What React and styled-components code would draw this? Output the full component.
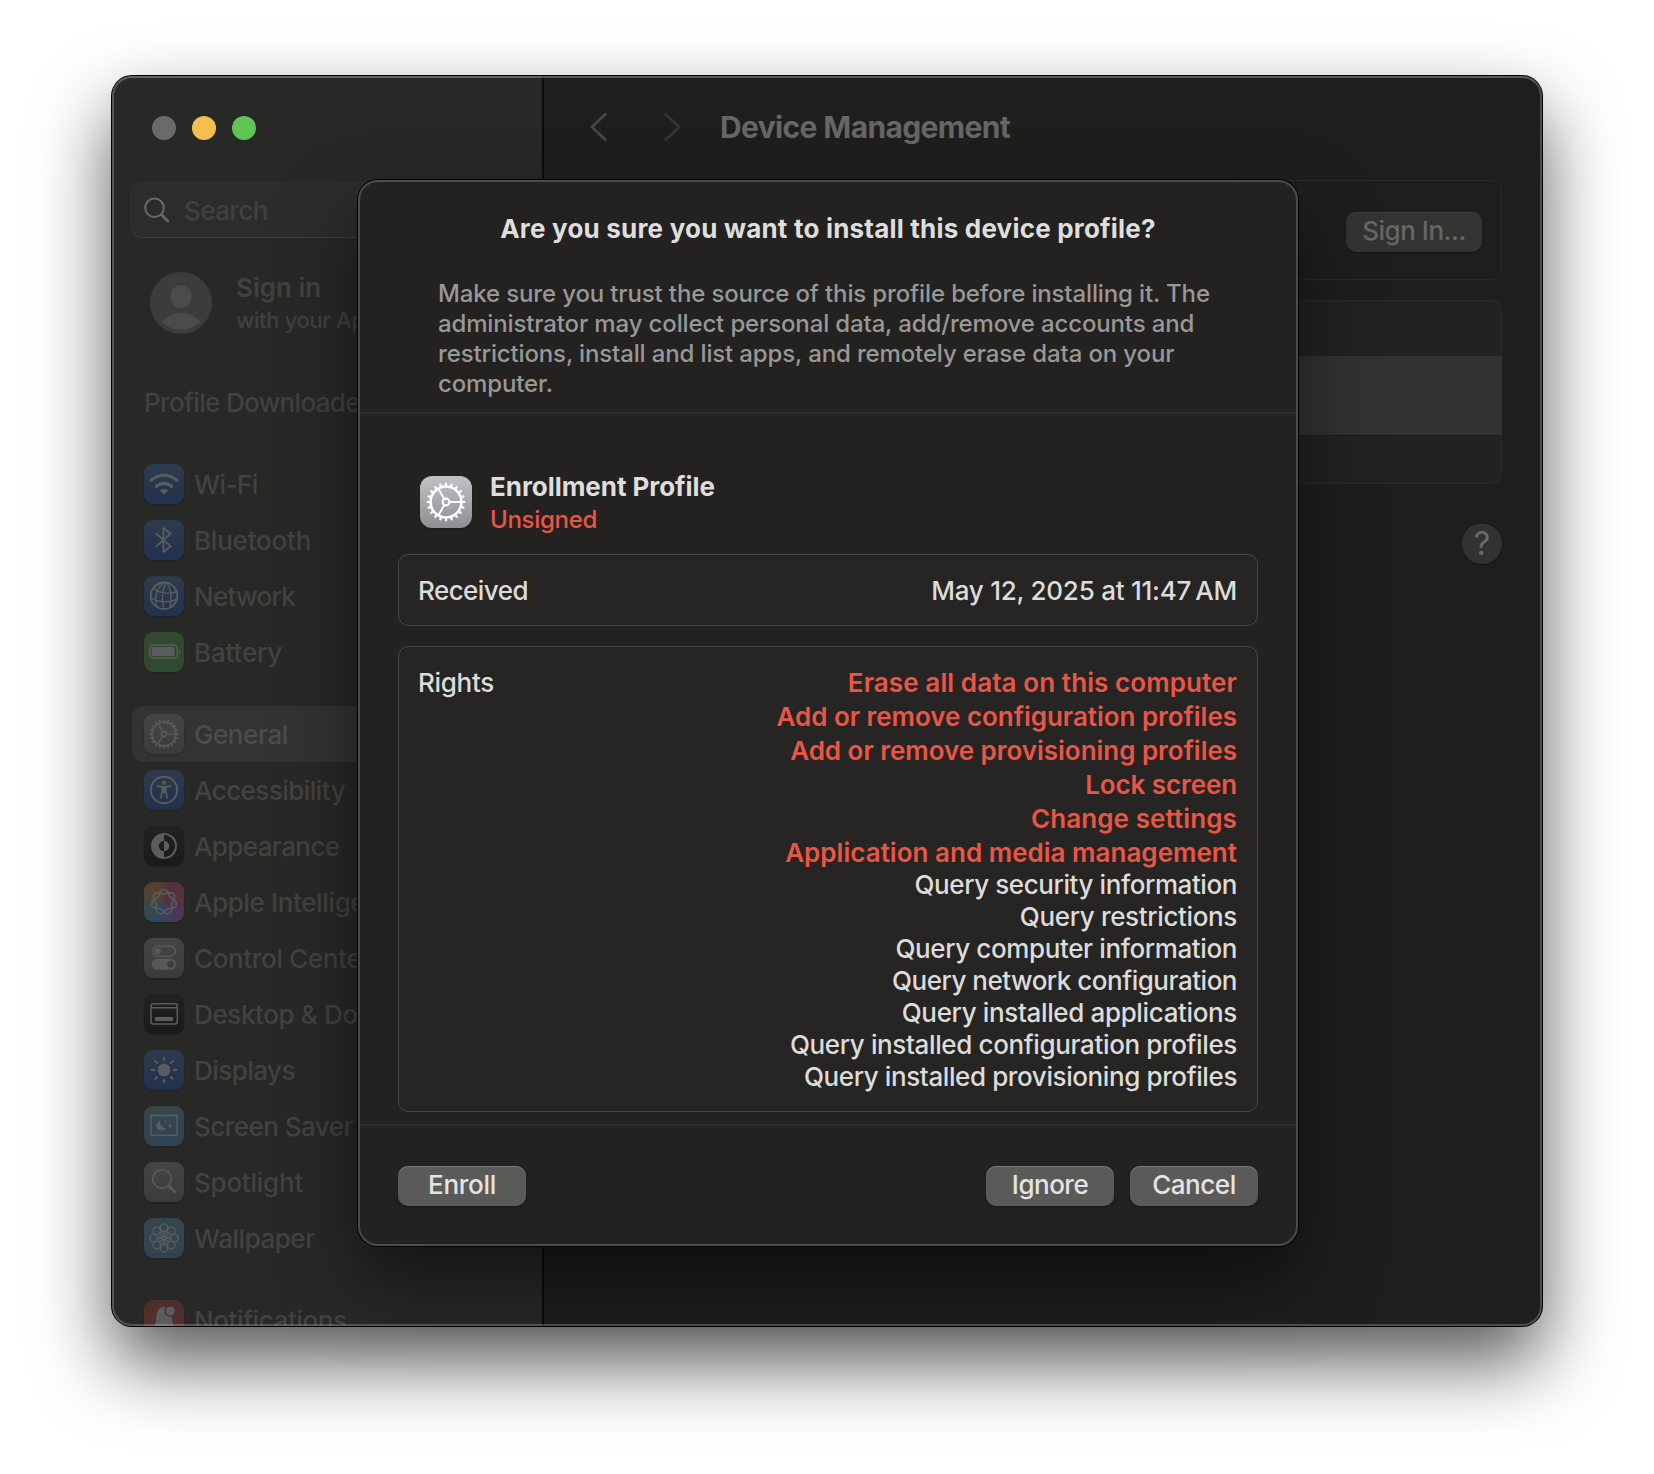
import React from "react";
import styled, { createGlobalStyle, css } from "styled-components";

const GlobalStyle = createGlobalStyle`
  * { box-sizing: border-box; }
  body {
    margin: 0;
    background: #fff;
    font-family: Inter, "Liberation Sans", sans-serif;
    font-size: 26px;
    font-weight: 500;
    overflow: hidden;
  }
  button { font: inherit; border: 0; padding: 0; }
  svg { display: block; flex: none; }
`;

const Desktop = styled.div`
  height: 1474px;
  padding: 76px 112px 148px;
`;

const Window = styled.div`
  position: relative;
  display: flex;
  height: 1250px;
  border-radius: 20px;
  background: #1e1e1c;
  box-shadow: 0 0 0 1px #000, 0 36px 76px rgba(0, 0, 0, 0.66);

  &::after {
    content: "";
    position: absolute;
    inset: 0;
    border-radius: 20px;
    border: 2px solid rgba(255, 255, 255, 0.21);
    border-top-color: rgba(255, 255, 255, 0.27);
    pointer-events: none;
  }
`;

/* ---------- sidebar ---------- */

const Sidebar = styled.aside`
  width: 432px;
  flex: none;
  display: flex;
  flex-direction: column;
  overflow: hidden;
  background: #282826;
  border-right: 2px solid #0b0b0a;
  border-radius: 20px 0 0 20px;
`;

const TrafficLights = styled.div`
  display: flex;
  gap: 16px;
  padding: 40px 0 0 40px;
`;

const Light = styled.span`
  width: 24px;
  height: 24px;
  border-radius: 50%;
  background: ${(p) => p.$color};
`;

const SearchField = styled.div`
  display: flex;
  align-items: center;
  gap: 14px;
  flex: none;
  height: 56px;
  margin: 42px 18px 0;
  padding: 0 13px;
  border: 1px solid #313130;
  border-bottom-color: #40403e;
  border-radius: 12px;
  background: #2c2c2c;
  color: #40403d;
  letter-spacing: -0.58px;
`;

const Account = styled.div`
  display: flex;
  gap: 24px;
  margin: 34px 0 0 38px;
  height: 62px;
  flex: none;
`;

const AccountText = styled.div`
  display: flex;
  flex-direction: column;
  white-space: nowrap;
  color: #414140;
`;

const AccountName = styled.div`
  font-weight: 600;
  line-height: 32px;
`;

const AccountHint = styled.div`
  font-size: 22px;
  line-height: 33px;
  letter-spacing: -0.35px;
`;

const Notice = styled.div`
  margin: 41px 0 -1px 32px;
  line-height: 56px;
  letter-spacing: -0.66px;
  color: #414140;
`;

const NavGroup = styled.nav`
  display: flex;
  flex-direction: column;
  flex: none;
  margin: 26px 20px 0;
`;

const NavItem = styled.div`
  display: flex;
  align-items: center;
  gap: 10px;
  height: 56px;
  padding: 0 12px;
  border-radius: 12px;
  white-space: nowrap;
  color: #424241;
  letter-spacing: ${(p) => p.$track}px;
  ${(p) =>
    p.$active &&
    css`
      background: #333333;
      color: #4c4c4b;
    `}
`;

const Tile = styled.span`
  display: flex;
  width: ${(p) => p.$size || 40}px;
  height: ${(p) => p.$size || 40}px;
  flex: none;
  border-radius: ${(p) => (p.$size ? 12 : 9)}px;
  background: ${(p) => p.$bg};
  color: ${(p) => p.$fg || "#5b5c5d"};
  box-shadow: 0 1px 2px rgba(0, 0, 0, 0.25);
`;

/* ---------- main pane ---------- */

const Main = styled.main`
  flex: 1;
  display: flex;
  flex-direction: column;
  padding: 0 40px;
`;

const Toolbar = styled.header`
  display: flex;
  align-items: center;
  height: 104px;
  padding: 0 0 3px 5px;
`;

const NavArrow = styled.svg`
  width: 18px;
  height: 30px;
  margin-right: ${(p) => p.$gap}px;
  fill: none;
  stroke: ${(p) => p.$color};
  stroke-width: 2.7;
  stroke-linecap: round;
  stroke-linejoin: round;
`;

const PageTitle = styled.h1`
  margin: 1px 0 0;
  font-size: 30px;
  line-height: 36px;
  font-weight: 700;
  letter-spacing: -0.63px;
  color: #666666;
`;

const AccountCard = styled.section`
  display: flex;
  align-items: center;
  justify-content: flex-end;
  height: 100px;
  padding: 4px 19px 0;
  border: 1px solid #292928;
  border-radius: 10px;
  background: #1e1e1e;
`;

const ProfilesCard = styled.section`
  display: flex;
  flex-direction: column;
  height: 184px;
  margin-top: 20px;
  border: 1px solid #2a2a29;
  border-radius: 10px;
  background: #222222;
`;

const SelectedProfile = styled.div`
  height: 80px;
  margin: 55px -1px 0;
  background: #323232;
  border-bottom: 1px solid #1b1b1b;
`;

const HelpButton = styled.button`
  align-self: flex-end;
  width: 40px;
  height: 40px;
  margin-top: 40px;
  border-radius: 50%;
  background: #323232;
  color: #6a6a6a;
  font-size: 32px;
  font-weight: 400;
  line-height: 40px;
  text-align: center;
  box-shadow: inset 0 1px 0 #3a3a3a, 0 1px 2px rgba(0, 0, 0, 0.3);
`;

const Button = styled.button`
  width: ${(p) => p.$width || 128}px;
  height: 40px;
  padding-bottom: 2px;
  border-radius: 10px;
  line-height: 38px;
  letter-spacing: ${(p) => p.$track || 0}px;
  background: ${(p) => (p.$dim ? "#333332" : "#5a5a58")};
  color: ${(p) => (p.$dim ? "#666665" : "#e4e4e3")};
  box-shadow: inset 0 1px 0 ${(p) => (p.$dim ? "#3d3d3c" : "#7a7a78")},
    0 1px 2px rgba(0, 0, 0, 0.4);
`;

/* ---------- sheet ---------- */

const Sheet = styled.div`
  position: absolute;
  left: 246px;
  top: 104px;
  width: 940px;
  height: 1066px;
  display: flex;
  flex-direction: column;
  border: 2px solid #4c4c4b;
  border-radius: 20px;
  background: #232220;
  box-shadow: 0 0 0 1px #000, 0 36px 76px rgba(0, 0, 0, 0.5);
`;

const SheetHeader = styled.div`
  padding: 31px 72px 13px 78px;
  border-bottom: 2px solid #2c2c2a;
`;

const SheetTitle = styled.h2`
  margin: 0 -22px 0 -28px;
  font-size: 26px;
  line-height: 32px;
  font-weight: 700;
  letter-spacing: 0.2px;
  text-align: center;
  color: #dededd;
`;

const SheetNote = styled.p`
  margin: 34px 0 0;
  font-size: 24px;
  line-height: 30px;
  letter-spacing: -0.14px;
  color: #989897;
`;

const SheetBody = styled.div`
  flex: 1;
  display: flex;
  flex-direction: column;
  padding: 57px 38px 12px;
  border-bottom: 2px solid #2c2c2a;
`;

const ProfileHead = styled.div`
  display: flex;
  gap: 18px;
  height: 63px;
  padding: 0 22px;
  margin-bottom: 20px;

  > ${Tile} { margin-top: 5px; }
`;

const ProfileName = styled.div`
  line-height: 32px;
  font-weight: 700;
  letter-spacing: -0.05px;
  color: #dededd;
`;

const ProfileStatus = styled.div`
  font-size: 24px;
  line-height: 34px;
  letter-spacing: -0.3px;
  color: #eb5545;
`;

const InfoBox = styled.div`
  display: flex;
  justify-content: space-between;
  padding: 19px 20px 0 19px;
  margin-bottom: ${(p) => p.$gap || 0}px;
  border: 1px solid #464643;
  border-radius: 10px;
  background: #262523;
  color: #dcdcdb;
  height: ${(p) => p.$height}px;
`;

const Term = styled.div`
  line-height: 34px;
  letter-spacing: ${(p) => p.$track}px;
`;

const Value = styled.div`
  line-height: 34px;
  letter-spacing: -0.25px;
`;

const RightsList = styled.ul`
  list-style: none;
  margin: 0;
  padding: 0;
  text-align: right;
`;

const Right = styled.li`
  line-height: ${(p) => (p.$danger ? 34 : 32)}px;
  font-weight: ${(p) => (p.$danger ? 600 : 500)};
  color: ${(p) => (p.$danger ? "#eb5545" : "#dcdcdb")};
  letter-spacing: ${(p) => p.$track}px;
  ${(p) => p.$danger && css`&:nth-child(6) { margin-bottom: -1px; }`}
`;

const SheetFooter = styled.div`
  display: flex;
  gap: 16px;
  height: 118px;
  padding: 40px 38px 0;
  > :first-child { margin-right: auto; }
`;

/* ---------- drawings ---------- */

const Glyph = ({ size = 40, children }) => (
  <svg
    width={size}
    height={size}
    viewBox="0 0 40 40"
    fill="none"
    stroke="currentColor"
    strokeWidth="1.8"
    strokeLinecap="round"
    strokeLinejoin="round"
  >
    {children}
  </svg>
);

const spin = (n, draw) =>
  Array.from({ length: n }, (_, i) => (
    <g key={i} transform={`rotate(${(360 / n) * i} 20 20)`}>
      {draw}
    </g>
  ));

const Gear = ({ size }) => (
  <Glyph size={size}>
    <circle cx="20" cy="20" r="11.9" strokeWidth="2" />
    {spin(20, <path d="M20 7.8V5.9" strokeWidth="1.7" />)}
    <circle cx="20" cy="20" r="2.6" strokeWidth="1.6" />
    {spin(3, <path d="M23 20H31.5" strokeWidth="1.5" strokeLinecap="butt" />)}
  </Glyph>
);

const knot = (() => {
  const pts = [];
  for (let i = 0; i <= 280; i++) {
    const t = (i / 280) * Math.PI * 4;
    const r = 10.2 + 2.3 * Math.cos(3.5 * t);
    pts.push(
      `${(20 + r * Math.sin(t)).toFixed(2)} ${(20 - r * Math.cos(t)).toFixed(2)}`
    );
  }
  return `M${pts.join("L")}Z`;
})();

const glyphs = {
  wifi: (
    <Glyph>
      <path d="M7 16.4A19 19 0 0 1 33 16.4" strokeWidth="3.2" />
      <path d="M12.4 22.4A11 11 0 0 1 27.6 22.4" strokeWidth="3.2" />
      <path
        d="M20 30.2L16.2 26.6A5.6 5.6 0 0 1 23.8 26.6Z"
        fill="currentColor"
        strokeWidth="0.6"
      />
    </Glyph>
  ),
  bluetooth: (
    <Glyph>
      <path d="M12.4 13.8L26.6 26.3L19.4 32V8L26.6 13.7L12.4 26.2" strokeWidth="1.8" />
    </Glyph>
  ),
  globe: (
    <Glyph>
      <circle cx="20" cy="19.7" r="13.3" strokeWidth="1.8" />
      <path
        d="M20.5 6.5C13.5 11 9.5 20 13.2 31M22 6.6C18.3 14 17 25 20.3 33M23.2 6.8C26.5 12 28.2 22 26.2 31.3M20.5 6.5C14.5 7 10 10.5 7.6 15M9.5 12.2C15 17.6 26 18.2 32.6 15.5M6.8 21.5C13 26.5 26 27.2 32.6 23.2"
        strokeWidth="1.4"
      />
    </Glyph>
  ),
  battery: (
    <Glyph>
      <rect x="5.7" y="13" width="27.5" height="13" rx="3.8" strokeWidth="1.4" />
      <rect x="7.6" y="15" width="23" height="9" rx="2" fill="currentColor" stroke="none" />
      <path d="M35.2 17.2C36.8 17.7 36.8 21.3 35.2 21.8Z" fill="currentColor" stroke="none" />
    </Glyph>
  ),
  gear: <Gear />,
  accessibility: (
    <Glyph>
      <circle cx="20" cy="20" r="13.2" strokeWidth="1.9" />
      <circle cx="20" cy="12.8" r="2.1" fill="currentColor" stroke="none" />
      <path
        d="M13.5 16L18.3 16.9V21L16.8 27.8M26.5 16L21.7 16.9V21L23.2 27.8M18.3 16.9H21.7M18.3 21.2L20 22L21.7 21.2"
        strokeWidth="1.6"
      />
      <path d="M18 16.8H22V22.5H18Z" fill="currentColor" stroke="none" />
    </Glyph>
  ),
  appearance: (
    <Glyph>
      <circle cx="20" cy="20" r="12" strokeWidth="2" />
      <path d="M20 8A12 12 0 0 0 20 32V25.2A5.2 5.2 0 0 1 20 14.8Z" fill="currentColor" stroke="none" />
      <path d="M20 14.8A5.2 5.2 0 0 1 20 25.2Z" fill="currentColor" stroke="none" />
    </Glyph>
  ),
  knot: (
    <Glyph>
      <path d={knot} strokeWidth="1.5" />
    </Glyph>
  ),
  toggles: (
    <Glyph>
      <rect x="8.5" y="8.3" width="23" height="10" rx="5" strokeWidth="1.5" />
      <circle cx="13.7" cy="13.3" r="3.2" fill="currentColor" stroke="none" />
      <rect x="7.8" y="20.8" width="24.4" height="11" rx="5.5" fill="currentColor" stroke="none" />
      <circle cx="26.6" cy="26.3" r="3.3" fill="#3c3c3b" stroke="none" />
    </Glyph>
  ),
  dock: (
    <Glyph>
      <rect x="7" y="9.8" width="26.3" height="20.3" rx="2.4" strokeWidth="1.5" />
      <path d="M7 13.8H33.3" strokeWidth="1.5" />
      <rect x="11" y="23" width="18" height="4" rx="0.8" fill="currentColor" stroke="none" />
    </Glyph>
  ),
  sun: (
    <Glyph>
      <circle cx="20" cy="20" r="6.3" fill="currentColor" stroke="none" />
      {spin(8, <path d="M20 10.3V7.6" strokeWidth="1.9" />)}
    </Glyph>
  ),
  screensaver: (
    <Glyph>
      <rect x="7" y="9.5" width="26.2" height="19.8" strokeWidth="1.5" strokeLinejoin="miter" />
      <path d="M16.5 14.8A5 5 0 1 0 22 21.8A5 5 0 0 1 16.5 14.8Z" fill="currentColor" stroke="none" />
      <path d="M26 17L26.7 19L28.7 19.7L26.7 20.4L26 22.4L25.3 20.4L23.3 19.7L25.3 19ZM21.5 13.2L22 14.8L23.6 15.3L22 15.8L21.5 17.4L21 15.8L19.4 15.3L21 14.8Z" fill="currentColor" stroke="none" />
    </Glyph>
  ),
  spotlight: (
    <Glyph>
      <circle cx="18" cy="17" r="9.3" strokeWidth="1.8" />
      <path d="M24.9 24L30.8 29.9" strokeWidth="2.6" />
    </Glyph>
  ),
  flower: (
    <Glyph>
      {spin(
        8,
        <>
          <circle cx="20" cy="9.6" r="3.7" strokeWidth="1.3" />
          <path d="M18 12.8L21.4 19.6M22 12.8L18.6 19.6" strokeWidth="1.1" />
        </>
      )}
    </Glyph>
  ),
  bell: (
    <Glyph>
      <path
        d="M8.5 31C12 26 11.5 20 12.5 15C13.5 10 16 7.5 18 7.3C19 6.5 20.5 6.4 21.3 7.2A6.3 6.3 0 0 0 27.8 16.8C28.5 21 28.5 26.5 32 31Z"
        fill="currentColor"
        stroke="none"
      />
      <circle cx="26.3" cy="11" r="4.5" fill="currentColor" stroke="none" />
    </Glyph>
  ),
};

const BLUE = "linear-gradient(#2d3c4c, #22314f)";
const TEAL = "linear-gradient(#36474b, #2f4353)";
const GRAY = "linear-gradient(#464646, #3b3b3b)";
const BLACK = "linear-gradient(#222222, #191919)";
const SPECTRUM =
  "conic-gradient(from 20deg, #54303f, #553140 15%, #4d3656 30%, #3c4058 42%, #2d4858 52%, #3a4652 65%, #54422f 78%, #57402c 88%, #54303f)";

const navGroups = [
  [
    { icon: "wifi", label: "Wi-Fi", bg: BLUE, track: -0.55 },
    { icon: "bluetooth", label: "Bluetooth", bg: BLUE, track: -0.22 },
    { icon: "globe", label: "Network", bg: BLUE, track: -0.72 },
    { icon: "battery", label: "Battery", bg: "linear-gradient(#344830, #2e4a2f)", track: -0.17 },
  ],
  [
    { icon: "gear", label: "General", bg: GRAY, track: -0.42, active: true, fg: "#585857" },
    { icon: "accessibility", label: "Accessibility", bg: BLUE, track: -0.54 },
    { icon: "appearance", label: "Appearance", bg: BLACK, track: -0.6 },
    { icon: "knot", label: "Apple Intelligence & Siri", bg: SPECTRUM, track: -0.38 },
    { icon: "toggles", label: "Control Center", bg: GRAY, track: -0.35, fg: "#585857" },
    { icon: "dock", label: "Desktop & Dock", bg: BLACK, track: -0.38 },
    { icon: "sun", label: "Displays", bg: BLUE, track: -0.53 },
    { icon: "screensaver", label: "Screen Saver", bg: TEAL, track: -0.54 },
    { icon: "spotlight", label: "Spotlight", bg: GRAY, track: -0.24, fg: "#585857" },
    { icon: "flower", label: "Wallpaper", bg: TEAL, track: -0.48 },
  ],
  [
    {
      icon: "bell",
      label: "Notifications",
      bg: "linear-gradient(#4c2f2d, #56302c)",
      track: -0.42,
    },
  ],
];

const rights = [
  { text: "Erase all data on this computer", danger: true, track: 0.095 },
  { text: "Add or remove configuration profiles", danger: true, track: -0.03 },
  { text: "Add or remove provisioning profiles", danger: true, track: -0.03 },
  { text: "Lock screen", danger: true, track: -0.1 },
  { text: "Change settings", danger: true, track: 0.1 },
  { text: "Application and media management", danger: true, track: 0.02 },
  { text: "Query security information", track: -0.42 },
  { text: "Query restrictions", track: -0.36 },
  { text: "Query computer information", track: -0.39 },
  { text: "Query network configuration", track: -0.49 },
  { text: "Query installed applications", track: -0.36 },
  { text: "Query installed configuration profiles", track: -0.37 },
  { text: "Query installed provisioning profiles", track: -0.395 },
];

export default function App() {
  return (
    <Desktop>
      <GlobalStyle />
      <Window>
        <Sidebar>
          <TrafficLights>
            <Light $color="#6b6a69" />
            <Light $color="#f5bf4f" />
            <Light $color="#61c554" />
          </TrafficLights>
          <SearchField>
            <svg width="26" height="26" viewBox="0 0 26 26" fill="none" stroke="#6a6a69" strokeLinecap="round">
              <circle cx="10.5" cy="10.8" r="9.3" strokeWidth="2" />
              <path d="M17.6 17.9L23.8 24.1" strokeWidth="2.7" />
            </svg>
            Search
          </SearchField>
          <Account>
            <svg width="62" height="62" viewBox="0 0 62 62">
              <circle cx="31" cy="31" r="31" fill="#3c3c3b" />
              <ellipse cx="31" cy="24.5" rx="10.5" ry="11.6" fill="#4b4b4b" />
              <path d="M11.5 49.5C17 43.5 24 41 31 41C38 41 45 43.5 50.5 49.5A27 27 0 0 1 11.5 49.5Z" fill="#4b4b4b" />
            </svg>
            <AccountText>
              <AccountName>Sign in</AccountName>
              <AccountHint>with your Apple</AccountHint>
            </AccountText>
          </Account>
          <Notice>Profile Downloaded</Notice>
          {navGroups.map((group) => (
            <NavGroup key={group[0].label}>
              {group.map((item) => (
                <NavItem key={item.label} $active={item.active} $track={item.track}>
                  <Tile $bg={item.bg} $fg={item.fg}>
                    {glyphs[item.icon]}
                  </Tile>
                  {item.label}
                </NavItem>
              ))}
            </NavGroup>
          ))}
        </Sidebar>

        <Main>
          <Toolbar>
            <NavArrow $color="#484847" $gap={56} viewBox="0 0 18 30">
              <path d="M16.5 2.2L2.8 15L16.5 27.8" />
            </NavArrow>
            <NavArrow $color="#343433" $gap={39} viewBox="0 0 18 30">
              <path d="M2.5 2.2L16.2 15L2.5 27.8" />
            </NavArrow>
            <PageTitle>Device Management</PageTitle>
          </Toolbar>
          <AccountCard>
            <Button $dim $width={136} $track={-0.48}>
              Sign In...
            </Button>
          </AccountCard>
          <ProfilesCard>
            <SelectedProfile />
          </ProfilesCard>
          <HelpButton>?</HelpButton>
        </Main>

        <Sheet>
          <SheetHeader>
            <SheetTitle>Are you sure you want to install this device profile?</SheetTitle>
            <SheetNote>
              Make sure you trust the source of this profile before installing it. The
              administrator may collect personal data, add/remove accounts and
              restrictions, install and list apps, and remotely erase data on your
              computer.
            </SheetNote>
          </SheetHeader>
          <SheetBody>
            <ProfileHead>
              <Tile $size={52} $bg="linear-gradient(#c2c1c6, #8f8e93)" $fg="#ffffff">
                <Gear size={52} />
              </Tile>
              <div>
                <ProfileName>Enrollment Profile</ProfileName>
                <ProfileStatus>Unsigned</ProfileStatus>
              </div>
            </ProfileHead>
            <InfoBox $height={72} $gap={20}>
              <Term $track={-0.55}>Received</Term>
              <Value>{"May 12, 2025 at 11:47\u202fAM"}</Value>
            </InfoBox>
            <InfoBox $height={466}>
              <Term $track={-0.3}>Rights</Term>
              <RightsList>
                {rights.map((r) => (
                  <Right key={r.text} $danger={r.danger} $track={r.track}>
                    {r.text}
                  </Right>
                ))}
              </RightsList>
            </InfoBox>
          </SheetBody>
          <SheetFooter>
            <Button $track={-0.3}>Enroll</Button>
            <Button $track={-0.5}>Ignore</Button>
            <Button $track={-0.45}>Cancel</Button>
          </SheetFooter>
        </Sheet>
      </Window>
    </Desktop>
  );
}
